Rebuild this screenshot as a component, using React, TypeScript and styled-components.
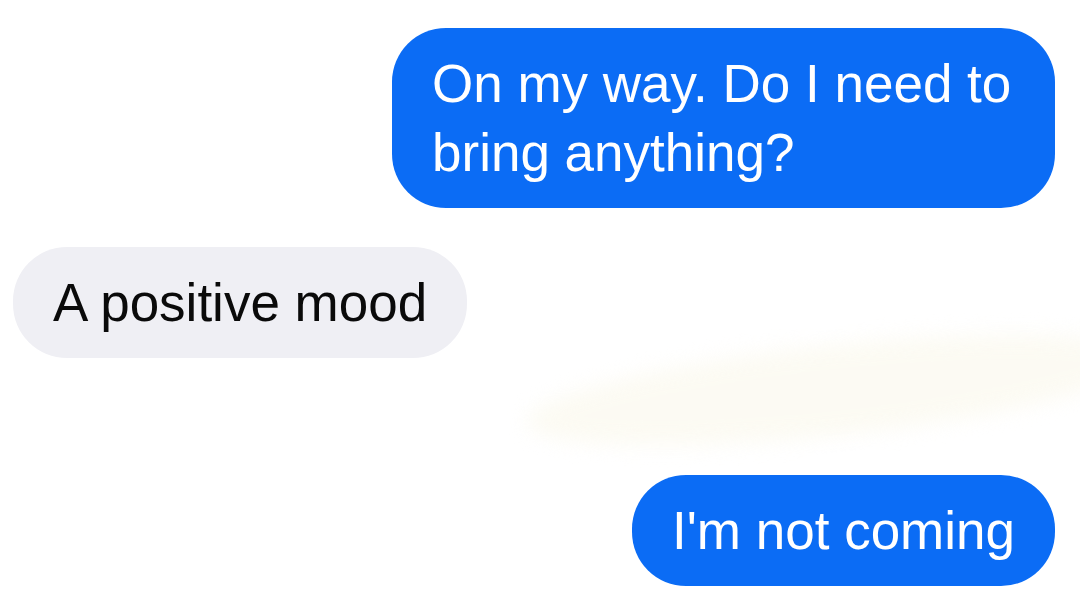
import styled, { createGlobalStyle } from "styled-components"
import { FC } from "react"

/*******************************************************/
const GlobalStyle = createGlobalStyle`
	html, body {
		margin: 0;
		padding: 0;
		background: #ffffff;
	}
	body {
		font-family: "Liberation Sans", Arial, sans-serif;
		-webkit-font-smoothing: antialiased;
	}
`

interface MessageProps {
	text: string
	mine?: boolean
	maxWidth?: number
	gap?: number
}

const messages: MessageProps[] = [
	{ text: "On my way. Do I need to bring anything?", mine: true, maxWidth: 663, gap: 0 },
	{ text: "A positive mood", gap: 39 },
	{ text: "I'm not coming", mine: true, gap: 117 },
]

const Message: FC<MessageProps> = ({ text, mine, maxWidth, gap = 0 }) => (
	<Row $mine={mine} $gap={gap}>
		<Bubble $mine={mine} $maxWidth={maxWidth}>
			{text}
		</Bubble>
	</Row>
)

export default function App() {
	return (
		<>
			<GlobalStyle />
			<Thread>
				<Smudge />
				{messages.map((m, i) => (
					<Message key={i} {...m} />
				))}
			</Thread>
		</>
	)
}

/*******************************************************/

const Thread = styled.main`
	position: relative;
	overflow: hidden;
	display: flex;
	flex-direction: column;
	width: 1080px;
	height: 594px;
	padding: 28px 25px 0 13px;
	box-sizing: border-box;
	background: #ffffff;
`

const Row = styled.div<{ $mine?: boolean; $gap: number }>`
	position: relative;
	z-index: 1;
	display: flex;
	justify-content: ${(p) => (p.$mine ? "flex-end" : "flex-start")};
	margin-top: ${(p) => p.$gap}px;
`

const Bubble = styled.div<{ $mine?: boolean; $maxWidth?: number }>`
	box-sizing: border-box;
	max-width: ${(p) => (p.$maxWidth ? `${p.$maxWidth}px` : "none")};
	padding: 21px 40px;
	border-radius: 54px;
	font-size: 53px;
	line-height: 69px;
	color: ${(p) => (p.$mine ? "#ffffff" : "#0a0a0a")};
	background: ${(p) => (p.$mine ? "#0b6cf5" : "#efeff4")};
`

const Smudge = styled.span`
	position: absolute;
	left: 525px;
	top: 345px;
	width: 620px;
	height: 90px;
	border-radius: 50%;
	background: #fbf9ee;
	opacity: 0.7;
	filter: blur(10px);
	transform: rotate(-6deg);
	pointer-events: none;
`
